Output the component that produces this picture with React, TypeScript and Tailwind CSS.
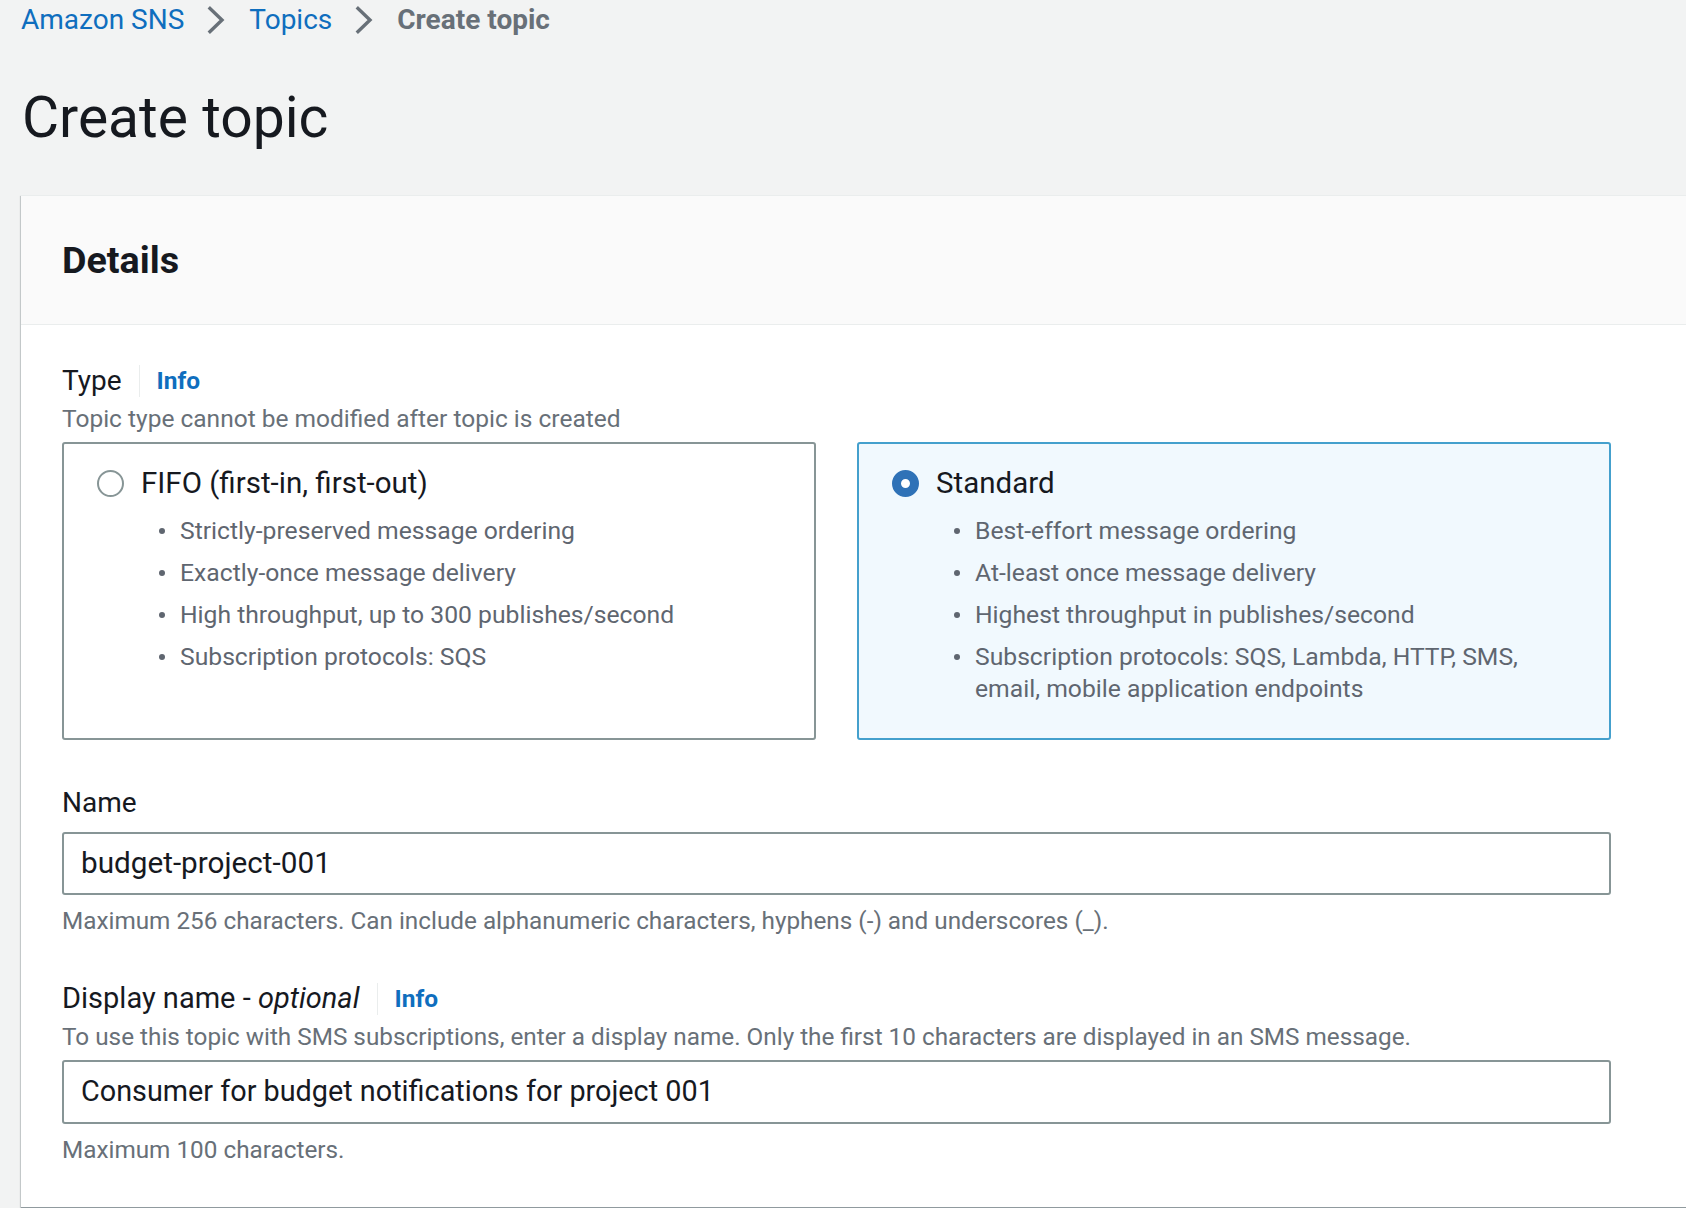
import React from 'react';

const fifoPoints = [
  'Strictly-preserved message ordering',
  'Exactly-once message delivery',
  'High throughput, up to 300 publishes/second',
  'Subscription protocols: SQS',
];

const standardPoints = [
  'Best-effort message ordering',
  'At-least once message delivery',
  'Highest throughput in publishes/second',
  'Subscription protocols: SQS, Lambda, HTTP, SMS, email, mobile application endpoints',
];

function Chevron() {
  return (
    <svg width="21" height="30" viewBox="0 0 21 30" fill="none" className="shrink-0">
      <polyline points="4,3.5 16,15 4,26.5" stroke="#687078" strokeWidth="3.4" strokeLinecap="square" />
    </svg>
  );
}

function InfoLink() {
  return (
    <>
      <span className="mx-[17px] h-[32px] w-px bg-[#eaeded]" />
      <a className="text-[24.5px] font-bold text-[#0f6ebe]">Info</a>
    </>
  );
}

function TypeTile({
  label,
  points,
  selected,
}: {
  label: string;
  points: string[];
  selected?: boolean;
}) {
  return (
    <div
      className={
        selected
          ? 'h-[298px] rounded-[3px] border-2 border-[#44a0cd] bg-[#f1f9fe] pl-[33px] pt-[19px] pr-6'
          : 'h-[298px] rounded-[3px] border-2 border-[#879596] bg-white pl-[33px] pt-[19px] pr-6'
      }
    >
      <div className="flex h-[40px] items-center">
        {selected ? (
          <span className="h-[27px] w-[27px] shrink-0 rounded-full border-[9px] border-[#2f72b7] bg-white" />
        ) : (
          <span className="h-[27px] w-[27px] shrink-0 rounded-full border-2 border-[#879596] bg-white" />
        )}
        <span className="ml-[17px] text-[29.5px] text-[#16191f]">{label}</span>
      </div>
      <ul className="mt-[12px] flex flex-col gap-[10px] pl-[83px] pr-[60px]">
        {points.map((p) => (
          <li key={p} className="relative text-[24.7px] leading-[32px] text-[#5f6670]">
            <span className="absolute -left-[21px] top-[13px] h-[6px] w-[6px] rounded-full bg-[#5f6670]" />
            {p}
          </li>
        ))}
      </ul>
    </div>
  );
}

export default function App() {
  return (
    <div className="h-[1208px] w-full overflow-hidden bg-[#f2f3f3] font-['Roboto',sans-serif]">
      <nav className="flex h-[40px] items-center pl-[21px] text-[28px]">
        <a className="text-[#0f6ebe]">Amazon SNS</a>
        <span className="mx-[22px]">
          <Chevron />
        </span>
        <a className="text-[#0f6ebe]">Topics</a>
        <span className="mx-[22px]">
          <Chevron />
        </span>
        <span className="font-bold text-[#687078]">Create topic</span>
      </nav>

      <h1 className="mt-[46px] pl-[22px] text-[57px] leading-[64px] text-[#16191f]">Create topic</h1>

      <section className="ml-[21px] mt-[45px] w-[1700px] bg-white shadow-[0_1px_1px_0_rgba(0,28,36,0.3),-1px_1px_1px_0_rgba(0,28,36,0.15)]">
        <div className="flex h-[130px] items-center border-y border-[#eaeded] bg-[#fafafa] pl-[41px]">
          <h2 className="text-[37.7px] font-bold text-[#16191f]">Details</h2>
        </div>

        <div className="w-[1590px] pb-[39px] pl-[41px] pt-[38px]">
          <div className="flex h-[36px] items-center">
            <span className="text-[28px] text-[#16191f]">Type</span>
            <InfoLink />
          </div>
          <p className="mt-[2px] text-[24.5px] leading-[36px] text-[#687078]">
            Topic type cannot be modified after topic is created
          </p>

          <div className="mt-[5px] grid grid-cols-2 gap-[41px]">
            <TypeTile label="FIFO (first-in, first-out)" points={fifoPoints} />
            <TypeTile label="Standard" points={standardPoints} selected />
          </div>

          <label className="mt-[45px] block text-[28px] leading-[36px] text-[#16191f]">Name</label>
          <div className="mt-[11px] flex h-[63px] items-center rounded-[3px] border-2 border-[#879596] bg-white pl-[17px] text-[29.7px] text-[#16191f]">
            budget-project-001
          </div>
          <p className="mt-[8px] text-[24.3px] leading-[36px] text-[#687078]">
            Maximum 256 characters. Can include alphanumeric characters, hyphens (-) and underscores (_).
          </p>

          <div className="mt-[42px] flex h-[36px] items-center">
            <span className="text-[29px] text-[#16191f]">
              Display name - <i>optional</i>
            </span>
            <InfoLink />
          </div>
          <p className="mt-[2px] text-[24.3px] leading-[36px] text-[#687078]">
            To use this topic with SMS subscriptions, enter a display name. Only the first 10 characters are displayed in an SMS message.
          </p>
          <div className="mt-[5px] flex h-[64px] items-center rounded-[3px] border-2 border-[#879596] bg-white pl-[17px] text-[28.8px] text-[#16191f]">
            Consumer for budget notifications for project 001
          </div>
          <p className="mt-[8px] text-[24.3px] leading-[36px] text-[#687078]">Maximum 100 characters.</p>
        </div>
      </section>
    </div>
  );
}
